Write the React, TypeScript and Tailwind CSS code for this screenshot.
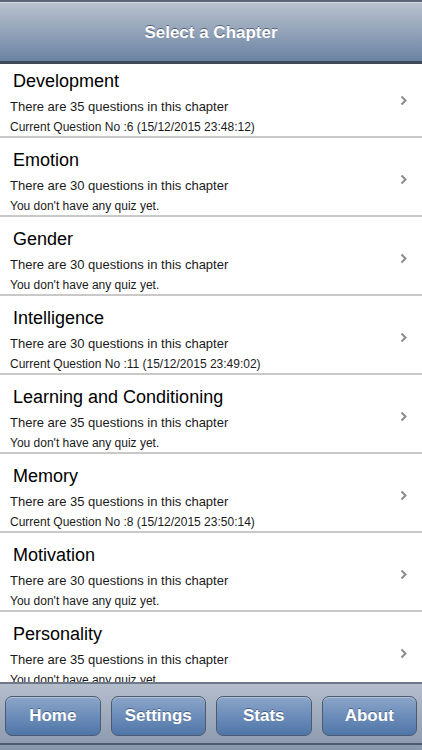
const chapters = [
  { name: "Development", count: 35, status: "Current Question No :6 (15/12/2015 23:48:12)" },
  { name: "Emotion", count: 30, status: "You don't have any quiz yet." },
  { name: "Gender", count: 30, status: "You don't have any quiz yet." },
  { name: "Intelligence", count: 30, status: "Current Question No :11 (15/12/2015 23:49:02)" },
  { name: "Learning and Conditioning", count: 35, status: "You don't have any quiz yet." },
  { name: "Memory", count: 35, status: "Current Question No :8 (15/12/2015 23:50:14)" },
  { name: "Motivation", count: 30, status: "You don't have any quiz yet." },
  { name: "Personality", count: 35, status: "You don't have any quiz yet." },
];

const tabs = ["Home", "Settings", "Stats", "About"];

function Chevron() {
  return (
    <svg width="7" height="11" viewBox="0 0 7 11" fill="none">
      <polyline points="1.5,1.5 5.5,5.5 1.5,9.5" stroke="#8c8c8c" strokeWidth="2" />
    </svg>
  );
}

function ChapterRow({ name, count, status }: { name: string; count: number; status: string }) {
  return (
    <div className="flex h-[79px] border-b-2 border-[#c9c9c9] bg-white">
      <div className="flex-1">
        <div className="pl-[13px] pt-[11px] text-[18px] leading-[22px] text-black">{name}</div>
        <div className="mt-[7px] pl-[10px] text-[13px] leading-[16px] text-[#1a1a1a]">
          There are {count} questions in this chapter
        </div>
        <div className="mt-[4px] pl-[10px] text-[12px] leading-[16px] text-[#1a1a1a]">{status}</div>
      </div>
      <div className="pr-[15px] pt-[36px]">
        <Chevron />
      </div>
    </div>
  );
}

export default function App() {
  return (
    <div
      className="flex h-[750px] w-[422px] flex-col overflow-hidden bg-white"
      style={{ fontFamily: '"Liberation Sans", Arial, sans-serif' }}
    >
      {/* Nav bar */}
      <div className="relative z-10 h-[64px] shrink-0 border-t-2 border-b-[3px] border-t-[#5a6474] border-b-[#3d4858] bg-linear-to-b from-[#bac2cf] via-[#93a3b9] to-[#6a83a3]">
        <div className="h-px bg-[#d6dce5]" />
        <div className="flex h-[56px] items-center justify-center pt-[4px] text-[17px] font-bold text-white [text-shadow:0_-1px_0_rgba(40,50,70,0.6)]">
          Select a Chapter
        </div>
      </div>

      {/* Chapter list */}
      <div className="flex-1 overflow-hidden">
        <div className="-mt-[5px]">
          {chapters.map((c) => (
            <ChapterRow key={c.name} {...c} />
          ))}
        </div>
      </div>

      {/* Tab bar */}
      <div className="h-[68px] shrink-0 border-t-2 border-[#6d7888] bg-linear-to-b from-[#b4bdcb] to-[#8997ad]">
        <div className="flex h-[61px] items-center gap-[10px] border-b-2 border-[#4f5b6d] px-[5px] pt-[4px]">
          {tabs.map((t) => (
            <div
              key={t}
              className="flex h-[40px] flex-1 items-center justify-center rounded-[7px] border-[1.5px] border-[#4c5a70] bg-linear-to-b from-[#8ba5c8] via-[#6c8dba] to-[#4f75a7] text-[17px] font-bold text-white shadow-[inset_0_1px_0_rgba(255,255,255,0.35)] [text-shadow:0_-1px_0_rgba(30,45,70,0.5)]"
            >
              {t}
            </div>
          ))}
        </div>
      </div>
    </div>
  );
}
